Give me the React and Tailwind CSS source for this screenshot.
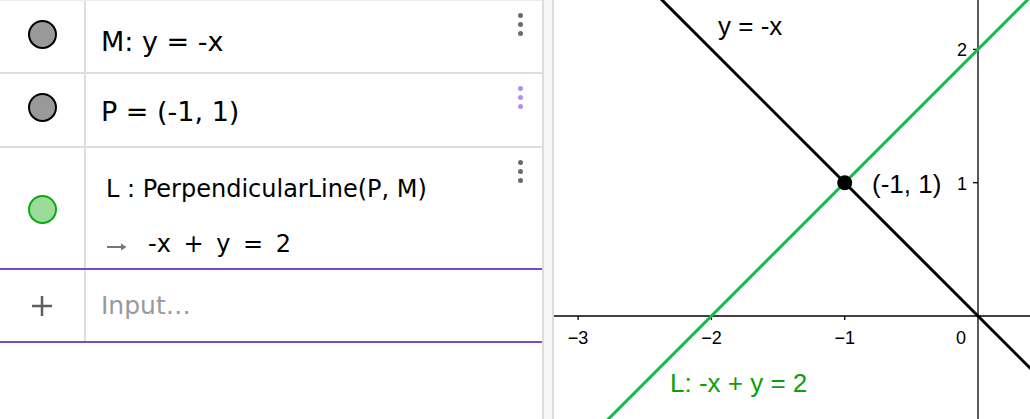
const border = 'border-[#dedede]';

function Dots({ color }) {
  return (
    <div className="absolute right-[19px] top-[12px] flex flex-col gap-[4px]">
      <span className={`block h-[5px] w-[5px] rounded-full ${color}`} />
      <span className={`block h-[5px] w-[5px] rounded-full ${color}`} />
      <span className={`block h-[5px] w-[5px] rounded-full ${color}`} />
    </div>
  );
}

function Marble({ className }) {
  return <div className={`h-[29px] w-[29px] rounded-full border-2 ${className}`} />;
}

function Graph() {
  const ox = 424;
  const oy = 316;
  const u = 133.3;
  const label = { fontFamily: '"Liberation Sans", Arial, sans-serif' };
  return (
    <svg width="476" height="419" viewBox="0 0 476 419" className="block">
      <rect width="476" height="419" fill="#fff" />
      {/* axes */}
      <line x1="0" y1={oy} x2="476" y2={oy} stroke="#000" strokeWidth="1.3" />
      <line x1={ox} y1="0" x2={ox} y2="419" stroke="#000" strokeWidth="1.3" />
      {[1, 2, 3].map((k) => (
        <line key={'x' + k} x1={ox - k * u} y1={oy} x2={ox - k * u} y2={oy + 4} stroke="#000" strokeWidth="1.3" />
      ))}
      {[1, 2].map((k) => (
        <line key={'y' + k} x1={ox - 5} y1={oy - k * u} x2={ox} y2={oy - k * u} stroke="#000" strokeWidth="1.3" />
      ))}
      <g style={label} fontSize="18" fill="#000">
        <text x={ox - 3 * u} y="344" textAnchor="middle">−3</text>
        <text x={ox - 2 * u} y="344" textAnchor="middle">−2</text>
        <text x={ox - u} y="344" textAnchor="middle">−1</text>
        <text x={ox - 12} y="344" textAnchor="end">0</text>
        <text x={ox - 11} y={oy - 2 * u + 7} textAnchor="end">2</text>
        <text x={ox - 11} y={oy - u + 7} textAnchor="end">1</text>
      </g>
      {/* y = -x */}
      <line x1="100" y1="-8" x2="490" y2="382" stroke="#000" strokeWidth="3" />
      {/* L: y = x + 2 */}
      <line x1="-10" y1="483.4" x2="480" y2="-6.6" stroke="#16b84a" strokeWidth="3" />
      <circle cx={ox - u} cy={oy - u} r="7.5" fill="#000" />
      <g style={label} fontSize="26">
        <text x="164" y="35" fill="#000">y = -x</text>
        <text x="318" y="193" fill="#000">(-1, 1)</text>
        <text x="116" y="392" fill="#0c9e0c">L: -x + y = 2</text>
      </g>
    </svg>
  );
}

export default function App() {
  return (
    <div className="flex h-[419px] w-[1030px] overflow-hidden bg-white font-['DejaVu_Sans',sans-serif] text-black">
      <div className="flex w-[542px] shrink-0 flex-col">
        {/* M */}
        <div className={`relative flex h-[74px] border-b-2 border-t ${border} border-t-[#ececec]`}>
          <div className={`flex w-[86px] shrink-0 justify-center border-r-2 ${border} pt-[19px]`}>
            <Marble className="border-black bg-[#999]" />
          </div>
          <div className="pl-[15px] pt-[25px] text-[27px] leading-[32px] whitespace-pre">M: y = -x</div>
          <Dots color="bg-[#6b6b6b]" />
        </div>
        {/* P */}
        <div className={`relative flex h-[74px] border-b-2 ${border}`}>
          <div className={`flex w-[86px] shrink-0 justify-center border-r-2 ${border} pt-[19px]`}>
            <Marble className="border-black bg-[#999]" />
          </div>
          <div className="pl-[15px] pt-[22px] text-[27px] leading-[32px] whitespace-pre">P = (-1, 1)</div>
          <Dots color="bg-[#b28fec]" />
        </div>
        {/* L */}
        <div className="relative flex h-[122px] border-b-2 border-[#7a47d4]">
          <div className={`flex w-[86px] shrink-0 items-center justify-center border-r-2 ${border} pt-[2px]`}>
            <Marble className="border-[#12a812] bg-[#9bdc9b]" />
          </div>
          <div className="flex flex-col gap-[27px] pl-[20px] pt-[27px] text-[24px] leading-[28px] whitespace-pre">
            <div>L : PerpendicularLine(P, M)</div>
            <div className="flex items-center">
              <svg width="22" height="10" viewBox="0 0 22 10" className="mt-[6px] mr-[20px]">
                <line x1="1" y1="5" x2="19" y2="5" stroke="#777" strokeWidth="2" />
                <path d="M15 1.5 L20.5 5 L15 8.5 Z" fill="#777" />
              </svg>
              <span className="[word-spacing:5px]">-x + y = 2</span>
            </div>
          </div>
          <Dots color="bg-[#6b6b6b]" />
        </div>
        {/* Input */}
        <div className="flex h-[73px] border-b-2 border-[#7a47d4]">
          <div className={`flex w-[86px] shrink-0 items-center justify-center border-r-2 ${border}`}>
            <svg width="22" height="22" viewBox="0 0 22 22">
              <line x1="11" y1="1" x2="11" y2="21" stroke="#5f5f5f" strokeWidth="2.5" />
              <line x1="1" y1="11" x2="21" y2="11" stroke="#5f5f5f" strokeWidth="2.5" />
            </svg>
          </div>
          <div className="flex items-center pl-[15px] text-[25px] text-[#999]">Input…</div>
        </div>
        <div className="flex-1" />
      </div>
      <div className="w-[12px] shrink-0 border-x-2 border-[#dcdcdc] bg-[#f6f6f6]" />
      <div className="flex-1">
        <Graph />
      </div>
    </div>
  );
}
